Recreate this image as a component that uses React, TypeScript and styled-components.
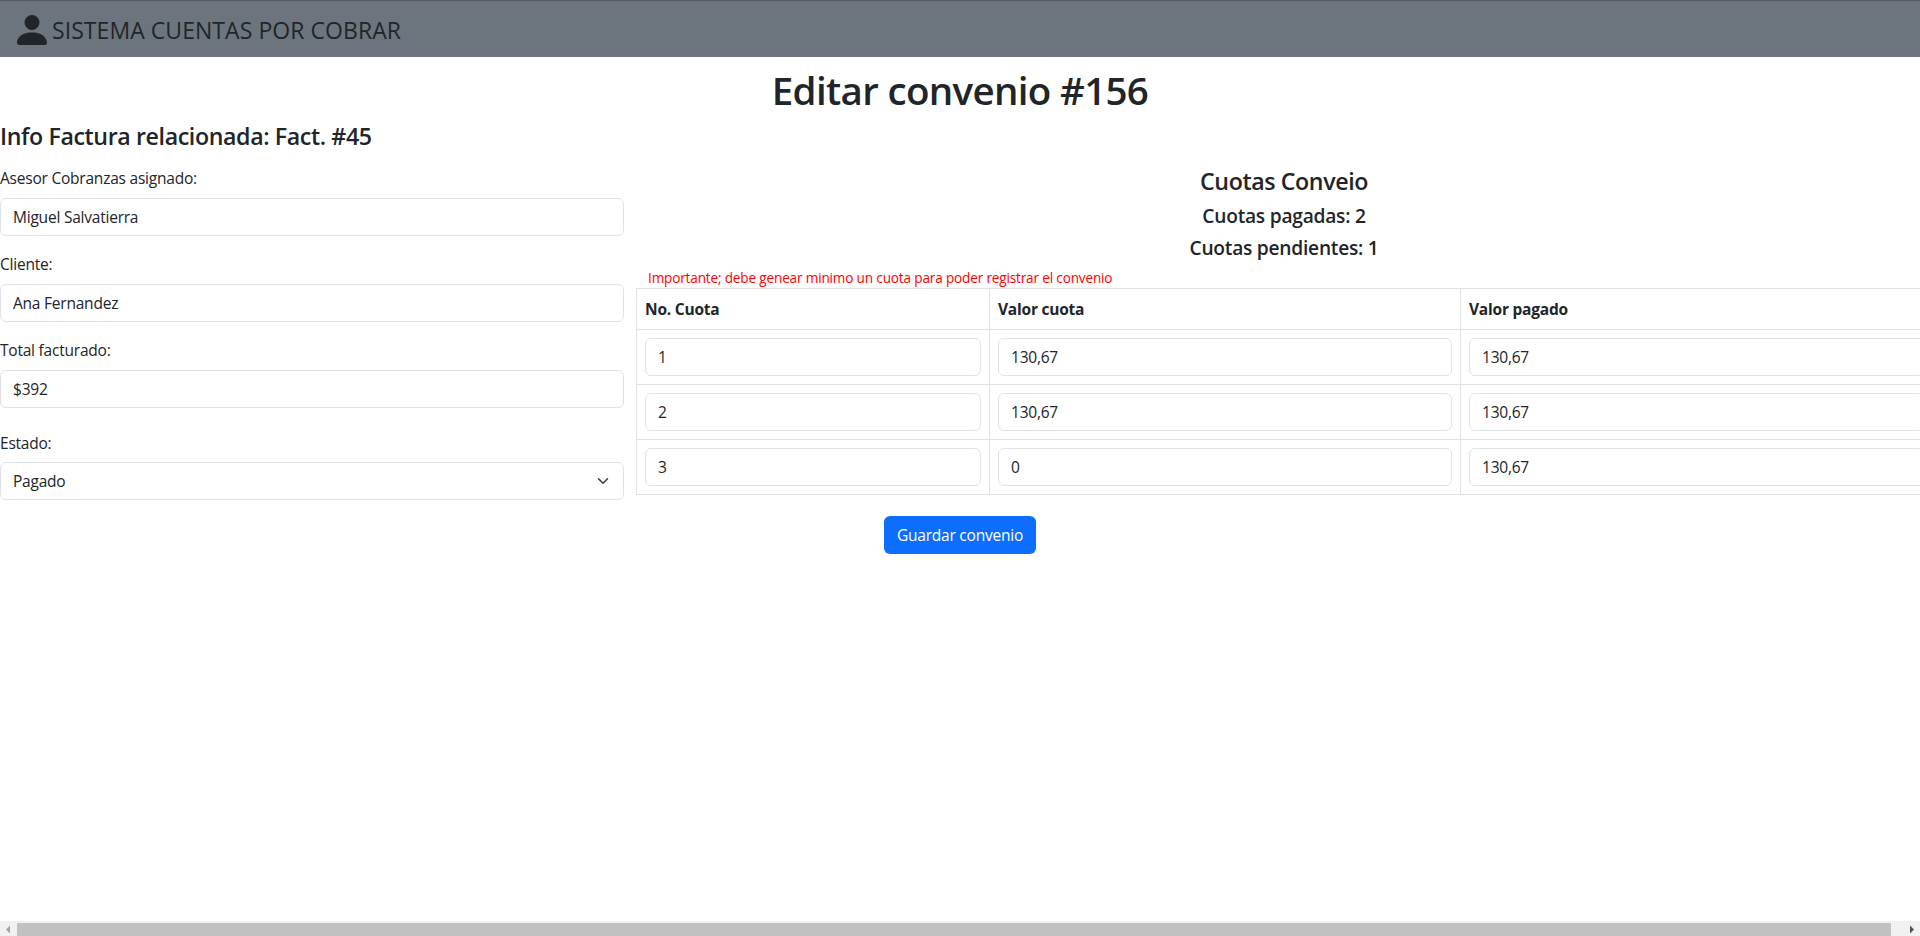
import React from 'react';
import styled, { createGlobalStyle } from 'styled-components';

const GlobalStyle = createGlobalStyle`
  *, *::before, *::after { box-sizing: border-box; }
  html, body { margin: 0; padding: 0; }
  body {
    background: #fff;
    color: #212529;
    font-family: 'Open Sans', 'Noto Sans', sans-serif;
    font-size: 15.5px;
    letter-spacing: -0.22px;
    line-height: 24px;
    overflow: hidden;
  }
`;

const Page = styled.div`
  display: flex;
  flex-direction: column;
  width: 100%;
  height: 936px;
  overflow: hidden;
`;

const Navbar = styled.nav`
  display: flex;
  align-items: center;
  flex: none;
  height: 57px;
  padding: 1px 12px 0;
  border-top: 1px solid #58595c;
  background: #6c757d;
`;

const UserIcon = styled.svg`
  width: 40px;
  height: 40px;
  fill: #212529;
`;

const Brand = styled.span`
  font-size: 23px;
  font-weight: 400;
  letter-spacing: 0.06px;
  line-height: 36px;
  padding-top: 1px;
`;

const Content = styled.main`
  flex: 1;
  min-height: 0;
  overflow: hidden;
`;

const PageTitle = styled.h1`
  margin: 9px 0 8px;
  font-size: 38.5px;
  font-weight: 600;
  letter-spacing: -0.67px;
  line-height: 48px;
  text-align: center;
`;

const Heading = styled.h4`
  margin: 0 0 8px;
  font-size: 23.2px;
  font-weight: 600;
  letter-spacing: -0.39px;
  line-height: 29px;
`;

const SubHeading = styled.h5`
  margin: 0 0 8px;
  font-size: 19.2px;
  font-weight: 600;
  letter-spacing: -0.25px;
  line-height: 24px;
`;

const Columns = styled.div`
  display: grid;
  grid-template-columns: 624px 1296px;
  column-gap: 12px;
  padding-top: 7px;
`;

const InfoForm = styled.form`
  display: flex;
  flex-direction: column;
`;

const Field = styled.div<{ $after?: number; $gap?: number }>`
  display: flex;
  flex-direction: column;
  gap: ${(p) => p.$gap ?? 8}px;
  margin-bottom: ${(p) => p.$after ?? 16}px;
`;

const Label = styled.label`
  display: block;
`;

const Input = styled.input`
  display: block;
  width: 100%;
  height: 38px;
  padding: 0 12px;
  border: 1px solid #dee2e6;
  border-radius: 6px;
  background: #fff;
  color: inherit;
  font: inherit;
  letter-spacing: inherit;
  outline: none;
`;

const Select = styled.div`
  display: flex;
  align-items: center;
  justify-content: space-between;
  height: 38px;
  padding: 0 12px;
  border: 1px solid #dee2e6;
  border-radius: 6px;
`;

const Chevron = styled.svg`
  width: 16px;
  height: 12px;
  fill: none;
  stroke: #343a40;
  stroke-width: 2;
  stroke-linecap: round;
  stroke-linejoin: round;
`;

const Installments = styled.section`
  display: flex;
  flex-direction: column;
`;

const Summary = styled.header`
  padding-top: 1px;
  text-align: center;
`;

const Warning = styled.p`
  margin: 0;
  padding-left: 12px;
  color: #f00;
  font-size: 13.6px;
  letter-spacing: -0.17px;
  line-height: 20px;
`;

const Table = styled.table`
  width: 1296px;
  border-collapse: collapse;
  table-layout: fixed;
`;

const Column = styled.col<{ $width: number }>`
  width: ${(p) => p.$width}px;
`;

const HeaderCell = styled.th`
  height: 41px;
  padding: 8px;
  border: 1px solid #dee2e6;
  font-weight: 700;
  text-align: left;
`;

const Cell = styled.td`
  height: 55px;
  padding: 8px;
  border: 1px solid #dee2e6;
`;

const Actions = styled.div`
  display: flex;
  justify-content: center;
  padding-top: 16px;
`;

const SaveButton = styled.button`
  width: 152px;
  height: 38px;
  padding: 0;
  border: 0;
  border-radius: 6px;
  background: #0d6efd;
  color: #fff;
  font: inherit;
  letter-spacing: inherit;
`;

const Scrollbar = styled.div`
  display: flex;
  align-items: stretch;
  flex: none;
  height: 15px;
  background: #f1f1f1;
`;

const ScrollArrow = styled.svg<{ $color: string }>`
  flex: none;
  width: 17px;
  height: 15px;
  fill: ${(p) => p.$color};
`;

const ScrollThumb = styled.div`
  width: 1874px;
  margin-top: 2px;
  margin-right: 12px;
  background: #c1c1c1;
`;

const rows = [
  ['1', '130,67', '130,67'],
  ['2', '130,67', '130,67'],
  ['3', '0', '130,67'],
];

export default function App() {
  return (
    <Page>
      <GlobalStyle />
      <Navbar>
        <UserIcon viewBox="0 0 16 16">
          <path d="M3 14s-1 0-1-1 1-4 6-4 6 3 6 4-1 1-1 1zm5-6a3 3 0 1 0 0-6 3 3 0 0 0 0 6" />
        </UserIcon>
        <Brand>SISTEMA CUENTAS POR COBRAR</Brand>
      </Navbar>
      <Content>
        <PageTitle>Editar convenio #156</PageTitle>
        <Heading>Info Factura relacionada: Fact. #45</Heading>
        <Columns>
          <InfoForm>
            <Field>
              <Label>Asesor Cobranzas asignado:</Label>
              <Input readOnly value="Miguel Salvatierra" />
            </Field>
            <Field>
              <Label>Cliente:</Label>
              <Input readOnly value="Ana Fernandez" />
            </Field>
            <Field $after={23}>
              <Label>Total facturado:</Label>
              <Input readOnly value="$392" />
            </Field>
            <Field $after={0} $gap={7}>
              <Label>Estado:</Label>
              <Select>
                <span>Pagado</span>
                <Chevron viewBox="0 0 16 16">
                  <path d="m2 5 6 6 6-6" />
                </Chevron>
              </Select>
            </Field>
          </InfoForm>
          <Installments>
            <Summary>
              <Heading>Cuotas Conveio</Heading>
              <SubHeading>Cuotas pagadas: 2</SubHeading>
              <SubHeading>Cuotas pendientes: 1</SubHeading>
            </Summary>
            <Warning>Importante; debe genear minimo un cuota para poder registrar el convenio</Warning>
            <Table>
              <colgroup>
                <Column $width={353} />
                <Column $width={471} />
                <Column $width={472} />
              </colgroup>
              <thead>
                <tr>
                  <HeaderCell>No. Cuota</HeaderCell>
                  <HeaderCell>Valor cuota</HeaderCell>
                  <HeaderCell>Valor pagado</HeaderCell>
                </tr>
              </thead>
              <tbody>
                {rows.map((row) => (
                  <tr key={row[0]}>
                    {row.map((value, i) => (
                      <Cell key={i}>
                        <Input readOnly value={value} />
                      </Cell>
                    ))}
                  </tr>
                ))}
              </tbody>
            </Table>
          </Installments>
        </Columns>
        <Actions>
          <SaveButton>Guardar convenio</SaveButton>
        </Actions>
      </Content>
      <Scrollbar>
        <ScrollArrow $color="#a3a3a3" viewBox="0 0 17 15">
          <path d="M6 8.5l4-4v8z" />
        </ScrollArrow>
        <ScrollThumb />
        <ScrollArrow $color="#505050" viewBox="0 0 17 15">
          <path d="M11 8.5l-4-4v8z" />
        </ScrollArrow>
      </Scrollbar>
    </Page>
  );
}
